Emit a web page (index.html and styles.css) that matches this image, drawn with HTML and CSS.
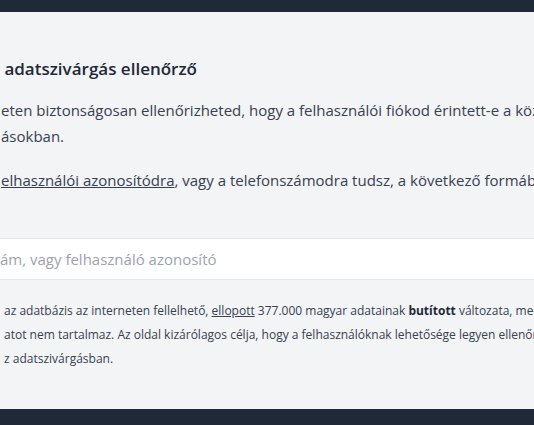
FILE: index.html
```html
<!DOCTYPE html>
<html lang="hu">
<head>
<meta charset="utf-8">
<title>Adatszivárgás ellenőrző</title>
<link rel="stylesheet" href="styles.css">
</head>
<body>
<div class="page">
  <header class="topbar"></header>
  <main class="main">
    <h1 class="title"> adatszivárgás ellenőrző</h1>
    <p class="lead">eten biztonságosan ellenőrizheted, hogy a felhasználói fiókod érintett-e a közelmúltbeli<br>ásokban.</p>
    <p class="lead lead-2"><a class="link" href="#">elhasználói azonosítódra</a>, vagy a telefonszámodra tudsz, a következő formában</p>
    <input class="search" type="text" placeholder="ám, vagy felhasználó azonosító">
    <p class="note">az adatbázis az interneten fellelhető, <a class="link" href="#">ellopott</a> 377.000 magyar adatainak <b>butított</b> változata, mely<br>atot nem tartalmaz. Az oldal kizárólagos célja, hogy a felhasználóknak lehetősége legyen ellenőrizni<br>z adatszivárgásban.</p>
  </main>
  <footer class="footer"></footer>
</div>
</body>
</html>
```
FILE: styles.css
```css
html, body {
  margin: 0;
  padding: 0;
  overflow: hidden;
}
body {
  font-family: "Open Sans", "Noto Sans", sans-serif;
  background: #f3f4f6;
}
.page {
  width: 534px;
  height: 425px;
  display: flex;
  flex-direction: column;
  overflow: hidden;
}
.topbar {
  height: 12px;
  background: #1f2937;
  flex: none;
}
.footer {
  height: 16px;
  background: #1f2937;
  flex: none;
}
.main {
  flex: 1;
  background: #f3f4f6;
  padding-top: 43px;
  white-space: nowrap;
  overflow: hidden;
}
.title {
  margin: 0;
  font-size: 17px;
  line-height: 28px;
  font-weight: 600;
  color: #1f2937;
  white-space: pre;
}
.lead {
  margin: 14px 0 0 1px;
  font-size: 15px;
  line-height: 26px;
  color: #374151;
}
.lead-2 {
  margin-top: 18px;
}
.link {
  color: inherit;
  text-decoration: underline;
}
.search {
  display: block;
  box-sizing: border-box;
  margin: 45px 0 0 -4px;
  width: 560px;
  height: 42px;
  padding: 0 0 0 3px;
  border: 1px solid #e5e7eb;
  background: #ffffff;
  font-family: inherit;
  font-size: 15px;
  color: #374151;
  outline: none;
}
.search::placeholder {
  color: #9ca3af;
}
.note {
  margin: 19px 0 0 4px;
  font-size: 12px;
  line-height: 24px;
  color: #374151;
}
.note b {
  color: #1f2937;
}
```
